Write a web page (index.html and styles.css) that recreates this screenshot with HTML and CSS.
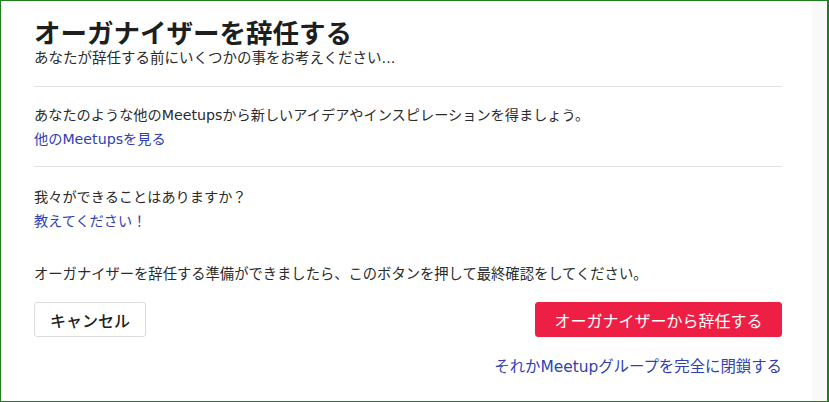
FILE: index.html
```html
<!DOCTYPE html>
<html lang="ja">
<head>
<meta charset="utf-8">
<title>オーガナイザーを辞任する</title>
<link rel="stylesheet" href="styles.css">
</head>
<body>
<div class="frame">
  <main class="content">
    <header class="head">
      <h1 class="title">オーガナイザーを辞任する</h1>
      <p class="subtitle">あなたが辞任する前にいくつかの事をお考えください...</p>
    </header>
    <section class="section">
      <p class="text">あなたのような他のMeetupsから新しいアイデアやインスピレーションを得ましょう。</p>
      <a class="link" href="#">他のMeetupsを見る</a>
    </section>
    <section class="section section-last">
      <p class="text">我々ができることはありますか？</p>
      <a class="link" href="#">教えてください！</a>
    </section>
    <p class="text confirm">オーガナイザーを辞任する準備ができましたら、このボタンを押して最終確認をしてください。</p>
    <div class="actions">
      <button class="btn btn-cancel" type="button">キャンセル</button>
      <button class="btn btn-danger" type="button">オーガナイザーから辞任する</button>
    </div>
    <div class="footer-link">
      <a class="link link-close" href="#">それかMeetupグループを完全に閉鎖する</a>
    </div>
  </main>
  <aside class="side"></aside>
</div>
</body>
</html>
```
FILE: styles.css
```css
html, body {
  margin: 0;
  padding: 0;
  height: 100%;
}

body {
  font-family: "DejaVu Sans", "Noto Sans CJK JP", sans-serif;
  color: #2b2b2b;
  background: #ffffff;
}

.frame {
  box-sizing: border-box;
  height: 402px;
  width: 829px;
  border: 1px solid #1b7f1b;
  border-right-width: 2px;
  display: flex;
}

.content {
  width: 748px;
  padding-left: 33px;
  padding-right: 29px;
}

.side {
  margin-left: auto;
  width: 15px;
  background: #f9f9fa;
}

.head {
  padding-top: 14px;
  padding-bottom: 17px;
}

.title {
  margin: 0;
  font-family: "Noto Sans CJK JP", sans-serif;
  font-size: 26.5px;
  font-weight: 700;
  line-height: 33px;
  color: #1e1e1e;
}

.subtitle {
  margin: 0;
  font-size: 14.5px;
  line-height: 21px;
  color: #2b2b2b;
}

.section {
  border-top: 1px solid #e3e3e3;
  padding: 16px 0 15px;
}

.section-last {
  padding-top: 18px;
  padding-bottom: 29px;
}

.text {
  margin: 0;
  font-size: 14.2px;
  line-height: 24px;
}

.link {
  display: inline-block;
  font-size: 14.2px;
  line-height: 24px;
  color: #3040b4;
  text-decoration: none;
}

.confirm {
  font-size: 14.3px;
  padding-bottom: 16px;
}

.actions {
  display: flex;
  justify-content: space-between;
  align-items: center;
}

.btn {
  box-sizing: border-box;
  height: 35px;
  border-radius: 3px;
  font-family: "Noto Sans CJK JP", sans-serif;
  font-size: 16px;
  cursor: pointer;
}

.btn-cancel {
  width: 112px;
  background: #ffffff;
  border: 1px solid #dcdcdc;
  color: #222222;
  font-weight: 500;
}

.btn-danger {
  width: 247px;
  background: #ed1f45;
  border: 1px solid #ed1f45;
  color: #ffffff;
}

.footer-link {
  display: flex;
  justify-content: flex-end;
  padding-top: 18px;
}

.link-close {
  font-size: 15.4px;
}
```
